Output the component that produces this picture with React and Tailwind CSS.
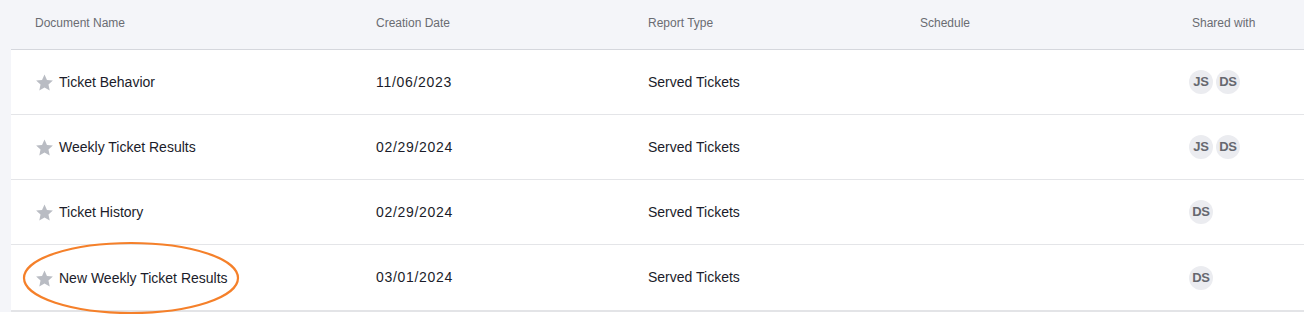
import React from "react";

const rows = [
  { name: "Ticket Behavior", date: "11/06/2023", type: "Served Tickets", shared: ["JS", "DS"] },
  { name: "Weekly Ticket Results", date: "02/29/2024", type: "Served Tickets", shared: ["JS", "DS"] },
  { name: "Ticket History", date: "02/29/2024", type: "Served Tickets", shared: ["DS"] },
  { name: "New Weekly Ticket Results", date: "03/01/2024", type: "Served Tickets", shared: ["DS"], circled: true },
];

const cols = "grid grid-cols-[341px_272px_272px_272px_1fr] items-center pl-6";

function Star() {
  return (
    <svg className="w-[19px] h-[19px] shrink-0" viewBox="0 0 24 24" fill="#b9bcc3">
      <path d="M12 1.8l3.1 6.9 7.5.8-5.6 5.1 1.6 7.4L12 18.2 5.4 22l1.6-7.4L1.4 9.5l7.5-.8z" />
    </svg>
  );
}

function Avatar({ initials }) {
  return (
    <div className="w-6 h-6 rounded-full bg-[#ebecf0] flex items-center justify-center text-[13px] font-bold text-[#66686f] tracking-tight">
      {initials}
    </div>
  );
}

export default function App() {
  return (
    <div className="w-[1304px] h-[328px] bg-white font-['Liberation_Sans',Arial,sans-serif] overflow-hidden">
      <div className="bg-[#f4f5f9] pl-[11px]">
        {/* header */}
        <div className={`${cols} h-[50px] pb-1 border-b border-[#d5d7dd] text-[12px] text-[#6a6c72]`}>
          <div>Document Name</div>
          <div>Creation Date</div>
          <div>Report Type</div>
          <div>Schedule</div>
          <div>Shared with</div>
        </div>

        {/* rows */}
        <div className="bg-white border-b-2 border-[#e3e4e7]">
          {rows.map((r, i) => (
            <div
              key={r.name}
              className={`${cols} h-[65px] text-[14px] text-[#1b1c2a] ${i < rows.length - 1 ? "border-b border-[#e4e5e8]" : "h-[64px]"}`}
            >
              <div className="relative flex items-center gap-[5px] pt-px">
                <Star />
                <span>{r.name}</span>
                {r.circled && (
                  <svg className="absolute left-[-13px] top-[-26px] pointer-events-none" width="218" height="74" viewBox="0 0 218 74">
                    <ellipse cx="109" cy="37" rx="107" ry="35" fill="none" stroke="#f5802a" strokeWidth="2.2" />
                  </svg>
                )}
              </div>
              <div className="tracking-[0.7px]">{r.date}</div>
              <div>{r.type}</div>
              <div></div>
              <div className="flex gap-[3px] -ml-[3px]">
                {r.shared.map((s) => (
                  <Avatar key={s} initials={s} />
                ))}
              </div>
            </div>
          ))}
        </div>
      </div>
    </div>
  );
}
